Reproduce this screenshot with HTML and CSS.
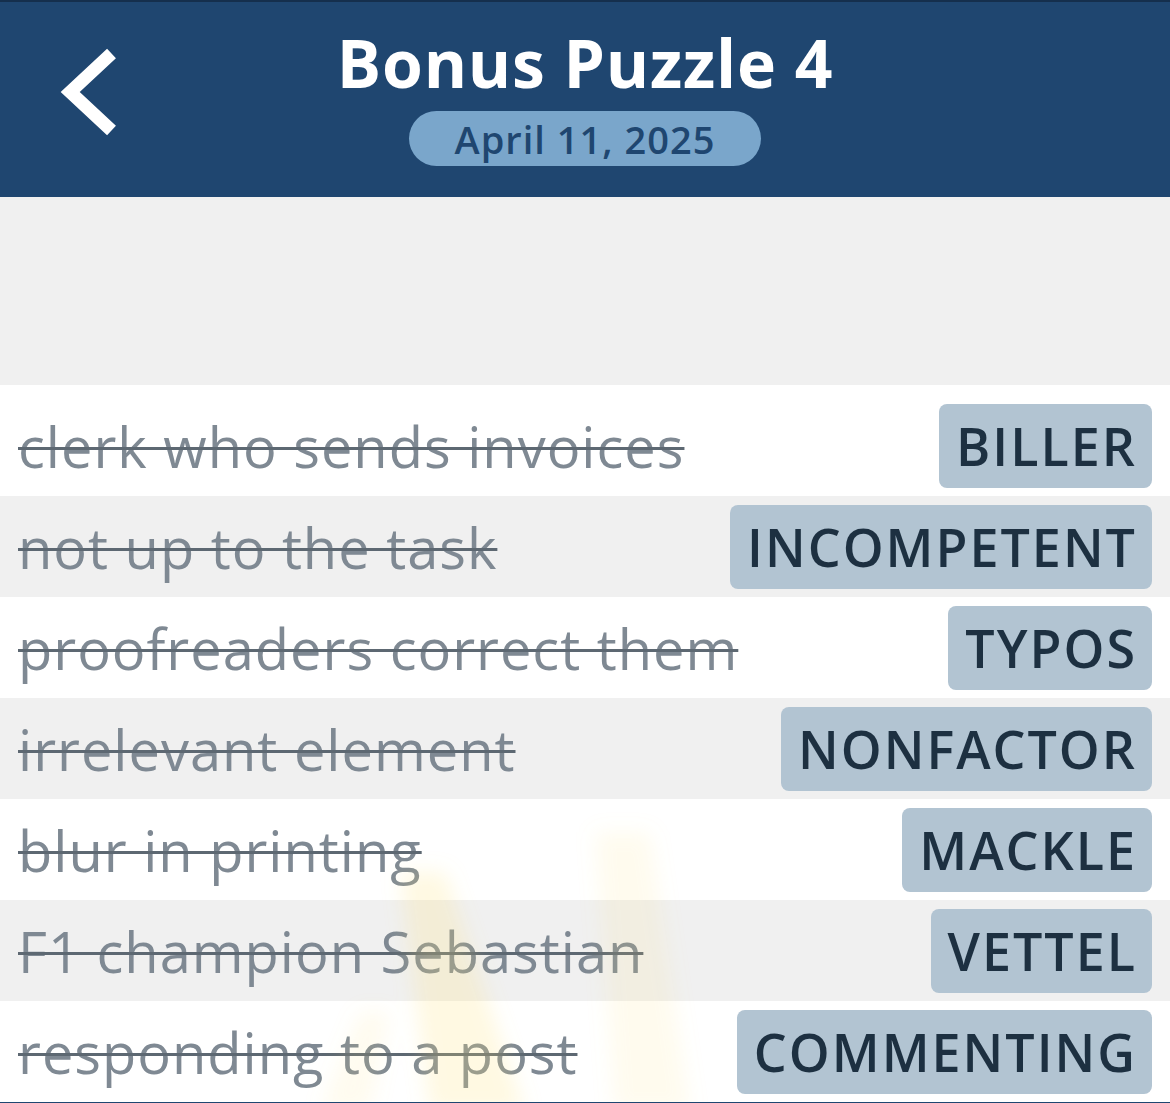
FILE: index.html
```html
<!DOCTYPE html>
<html lang="en">
<head>
<meta charset="utf-8">
<title>Bonus Puzzle 4</title>
<link rel="stylesheet" href="styles.css">
</head>
<body>
<header class="topbar">
  <div class="back">
    <svg class="back-icon" width="70" height="100" viewBox="0 0 70 100" aria-hidden="true">
      <polyline points="61.5,11.5 20.2,50 61.5,88.5" fill="none" stroke="#ffffff" stroke-width="13" stroke-linejoin="miter" stroke-linecap="butt"/>
    </svg>
  </div>
  <div class="title-block">
    <h1 class="title">Bonus Puzzle 4</h1>
    <div class="date-pill">April 11, 2025</div>
  </div>
  <div class="right-slot"></div>
</header>
<div class="spacer"></div>
<main class="list">
  <div class="row first"><span class="clue">clerk who sends invoices</span><span class="answer">BILLER</span></div>
  <div class="row alt"><span class="clue">not up to the task</span><span class="answer">INCOMPETENT</span></div>
  <div class="row"><span class="clue">proofreaders correct them</span><span class="answer">TYPOS</span></div>
  <div class="row alt"><span class="clue">irrelevant element</span><span class="answer">NONFACTOR</span></div>
  <div class="row"><span class="clue">blur in printing</span><span class="answer">MACKLE</span></div>
  <div class="row alt"><span class="clue">F1 champion Sebastian</span><span class="answer">VETTEL</span></div>
  <div class="row"><span class="clue">responding to a post</span><span class="answer">COMMENTING</span></div>
  <svg class="rays" width="1170" height="320" viewBox="0 0 1170 320" aria-hidden="true">
    <defs>
      <filter id="soft" x="-50%" y="-50%" width="200%" height="200%">
        <feGaussianBlur stdDeviation="10"/>
      </filter>
    </defs>
    <g filter="url(#soft)">
      <polygon points="400,90 445,90 525,330 430,330" fill="#ffe27a" opacity="0.22"/>
      <polygon points="595,50 650,50 690,330 615,330" fill="#ffe27a" opacity="0.13"/>
      <polygon points="360,230 390,230 370,330 320,330" fill="#ffe27a" opacity="0.12"/>
    </g>
  </svg>
</main>
</body>
</html>
```
FILE: styles.css
```css
html, body {
  margin: 0;
  padding: 0;
}
body {
  background: #f0f0f0;
  font-family: "Open Sans", "Noto Sans", sans-serif;
  width: 1170px;
  overflow: hidden;
}
.topbar {
  height: 195px;
  background: #1f4670;
  border-top: 2px solid #152f4d;
  display: grid;
  grid-template-columns: 1fr auto 1fr;
  align-items: start;
}
.back {
  padding: 40px 0 0 50px;
}
.back-icon {
  display: block;
}
.title-block {
  display: flex;
  flex-direction: column;
  align-items: center;
}
.title {
  margin: 18px 0 0 0;
  font-size: 66px;
  font-weight: 700;
  color: #ffffff;
  line-height: 84px;
  letter-spacing: 0.8px;
}
.date-pill {
  margin-top: 7px;
  width: 352px;
  height: 55px;
  border-radius: 28px;
  background: #7aa6cb;
  color: #1f4670;
  font-size: 38px;
  font-weight: 600;
  letter-spacing: 1px;
  display: flex;
  align-items: center;
  justify-content: center;
}
.spacer {
  height: 188px;
}
.list {
  position: relative;
  border-bottom: 2px solid #1f4670;
}
.row {
  height: 101px;
  box-sizing: border-box;
  display: flex;
  align-items: center;
  justify-content: space-between;
  padding: 0 18px;
  background: #ffffff;
}
.row.first {
  height: 111px;
  padding-top: 10px;
}
.row.alt {
  background: #f0f0f0;
}
.clue {
  font-size: 56px;
  font-weight: 400;
  color: #7f8993;
  letter-spacing: 1px;
  text-decoration: line-through;
  text-decoration-color: #5d6872;
  text-decoration-thickness: 3px;
  white-space: nowrap;
}
.answer {
  height: 84px;
  box-sizing: border-box;
  padding: 0 15px 0 17px;
  border-radius: 8px;
  background: #b2c4d2;
  color: #1d3041;
  font-size: 52px;
  font-weight: 600;
  letter-spacing: 2px;
  display: flex;
  align-items: center;
  white-space: nowrap;
}
.rays {
  position: absolute;
  left: 0;
  bottom: 0;
  pointer-events: none;
}
```
